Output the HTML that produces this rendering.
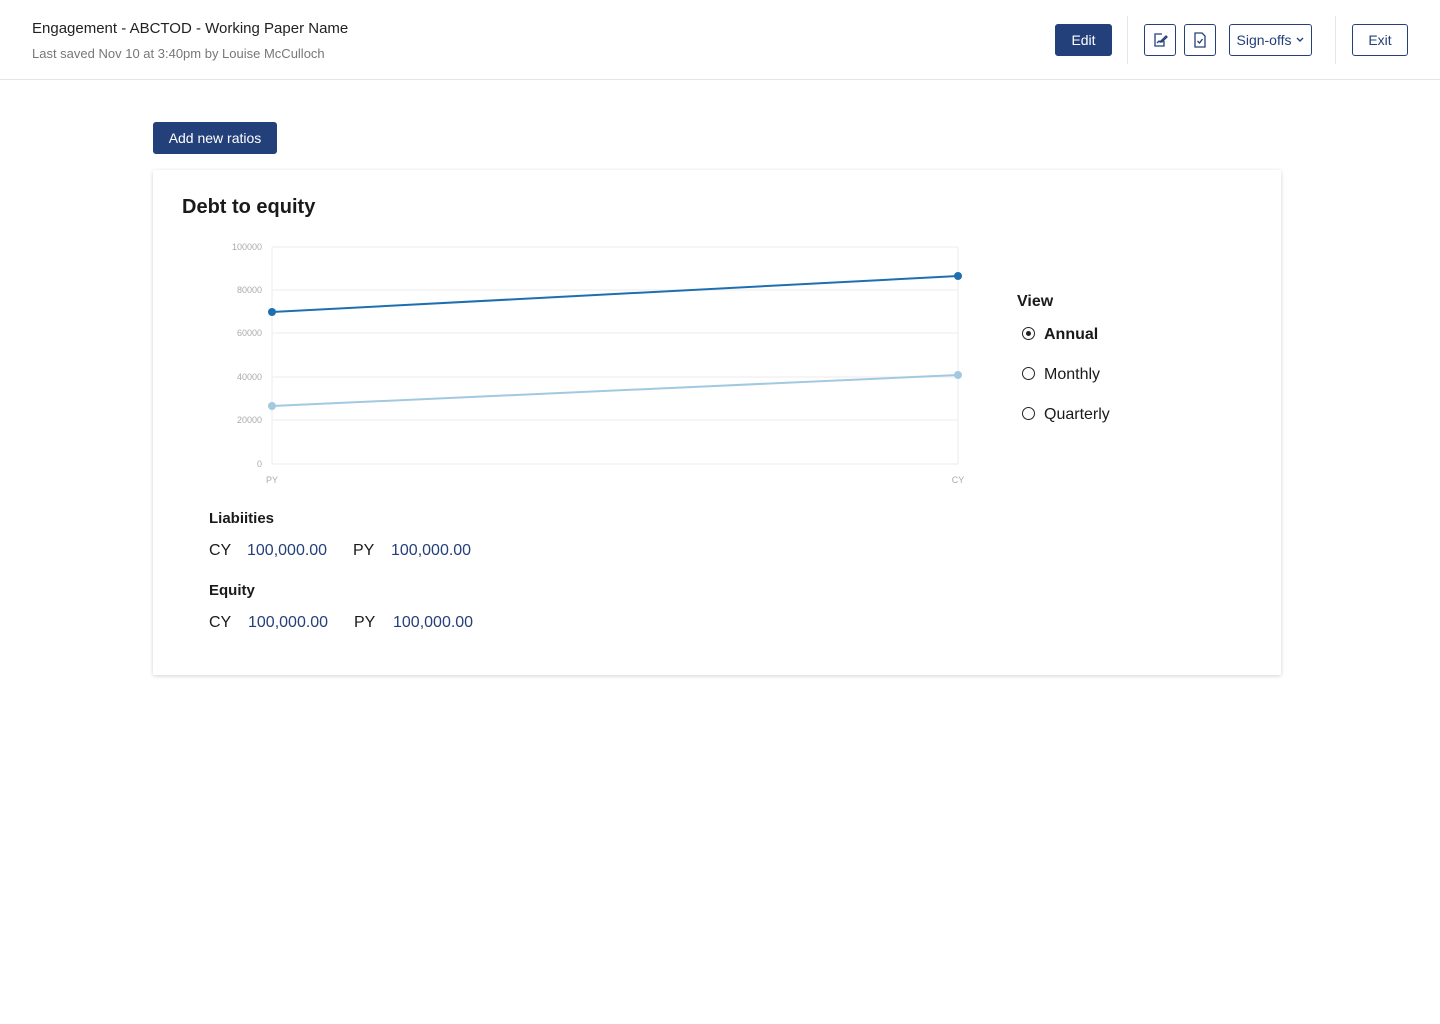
<!DOCTYPE html>
<html><head><meta charset="utf-8"><style>
*{box-sizing:border-box;margin:0;padding:0}
body{width:1440px;height:1024px;background:#fff;font-family:"Liberation Sans",sans-serif;color:#1a1a1a;position:relative;overflow:hidden}
.hdr{position:absolute;left:0;top:0;width:1440px;height:80px;border-bottom:1px solid #e6e6e6}
.t1{position:absolute;left:32px;top:20px;font-size:15px;color:#222}
.t2{position:absolute;left:32px;top:46px;font-size:13px;color:#777}
.btn{position:absolute;border:1px solid #24407a;border-radius:3px;color:#24407a;font-size:14px;display:flex;align-items:center;justify-content:center;height:32px;top:24px;background:#fff}
.fill{background:#24407a;color:#fff}
.sep{position:absolute;top:16px;width:1px;height:48px;background:#e6e6e6}
.card{position:absolute;left:153px;top:170px;width:1128px;height:505px;background:#fff;box-shadow:0 1px 4px rgba(0,0,0,.18);border-radius:2px}
.abs{position:absolute}
.v{color:#24407a}
.r{position:absolute;left:1022px;width:13px;height:13px;border:1.5px solid #222;border-radius:50%}
</style></head><body>
<div class="hdr">
<div class="t1">Engagement - ABCTOD - Working Paper Name</div>
<div class="t2">Last saved Nov 10 at 3:40pm by Louise McCulloch</div>
<div class="btn fill" style="left:1055px;width:57px">Edit</div>
<div class="sep" style="left:1127px"></div>
<div class="btn" style="left:1144px;width:32px"><svg width="16" height="16" viewBox="0 0 16 16" fill="none" stroke="#24407a" stroke-width="1.3"><path d="M10 2H3v12h9V9M5 11l2-2 1 1 2-2"/><path d="M9 9l5-5 1 1-5 5H9z"/></svg></div>
<div class="btn" style="left:1184px;width:32px"><svg width="14" height="16" viewBox="0 0 14 16" fill="none" stroke="#24407a" stroke-width="1.3"><path d="M2 1h7l3 3v11H2z"/><path d="M4.5 9l2 2 3-4"/></svg></div>
<div class="btn" style="left:1229px;width:83px">Sign-offs <svg width="10" height="8" viewBox="0 0 10 8" style="margin-left:3px"><path d="M2 2l3 3 3-3" stroke="#24407a" fill="none" stroke-width="1.4"/></svg></div>
<div class="sep" style="left:1335px"></div>
<div class="btn" style="left:1352px;width:56px">Exit</div>
</div>
<div class="btn fill" style="left:153px;top:122px;width:124px;font-size:14px">Add new ratios</div>
<div class="card"></div>
<div class="abs" style="left:182px;top:196px;font-size:20px;font-weight:bold">Debt to equity</div>
<svg class="abs" style="left:200px;top:235px" width="780" height="260">
<g stroke="#f2f2f2" stroke-width="1.5" fill="none">
<line x1="72" y1="12" x2="758" y2="12"/><line x1="72" y1="55" x2="758" y2="55"/><line x1="72" y1="98" x2="758" y2="98"/><line x1="72" y1="142" x2="758" y2="142"/><line x1="72" y1="185" x2="758" y2="185"/><line x1="72" y1="229" x2="758" y2="229"/>
<line x1="72" y1="12" x2="72" y2="229"/><line x1="758" y1="12" x2="758" y2="229"/></g>
<g font-family="Liberation Sans" font-size="9" fill="#aaa" text-anchor="end">
<text x="62" y="15">100000</text><text x="62" y="58">80000</text><text x="62" y="101">60000</text><text x="62" y="145">40000</text><text x="62" y="188">20000</text><text x="62" y="232">0</text></g>
<g font-family="Liberation Sans" font-size="9" fill="#aaa" text-anchor="middle"><text x="72" y="248">PY</text><text x="758" y="248">CY</text></g>
<line x1="72" y1="77" x2="758" y2="41" stroke="#1f6fb0" stroke-width="2"/>
<circle cx="72" cy="77" r="4" fill="#1f6fb0"/><circle cx="758" cy="41" r="4" fill="#1f6fb0"/>
<line x1="72" y1="171" x2="758" y2="140" stroke="#a3c9e0" stroke-width="2"/>
<circle cx="72" cy="171" r="4" fill="#a3c9e0"/><circle cx="758" cy="140" r="4" fill="#a3c9e0"/>
</svg>
<div class="abs" style="left:1017px;top:293px;font-size:16px;font-weight:bold">View</div>
<div class="r" style="top:327px"><div style="position:absolute;left:2.5px;top:2.5px;width:5px;height:5px;border-radius:50%;background:#222"></div></div>
<div class="abs" style="left:1044px;top:326px;font-size:16px;font-weight:bold">Annual</div>
<div class="r" style="top:367px"></div>
<div class="abs" style="left:1044px;top:366px;font-size:16px">Monthly</div>
<div class="r" style="top:407px"></div>
<div class="abs" style="left:1044px;top:406px;font-size:16px">Quarterly</div>
<div class="abs" style="left:209px;top:510px;font-size:15px;font-weight:bold">Liabiities</div>
<div class="abs" style="left:209px;top:542px;font-size:16px">CY</div>
<div class="abs v" style="left:247px;top:542px;font-size:16px">100,000.00</div>
<div class="abs" style="left:353px;top:542px;font-size:16px">PY</div>
<div class="abs v" style="left:391px;top:542px;font-size:16px">100,000.00</div>
<div class="abs" style="left:209px;top:582px;font-size:15px;font-weight:bold">Equity</div>
<div class="abs" style="left:209px;top:614px;font-size:16px">CY</div>
<div class="abs v" style="left:248px;top:614px;font-size:16px">100,000.00</div>
<div class="abs" style="left:354px;top:614px;font-size:16px">PY</div>
<div class="abs v" style="left:393px;top:614px;font-size:16px">100,000.00</div>
</body></html>
